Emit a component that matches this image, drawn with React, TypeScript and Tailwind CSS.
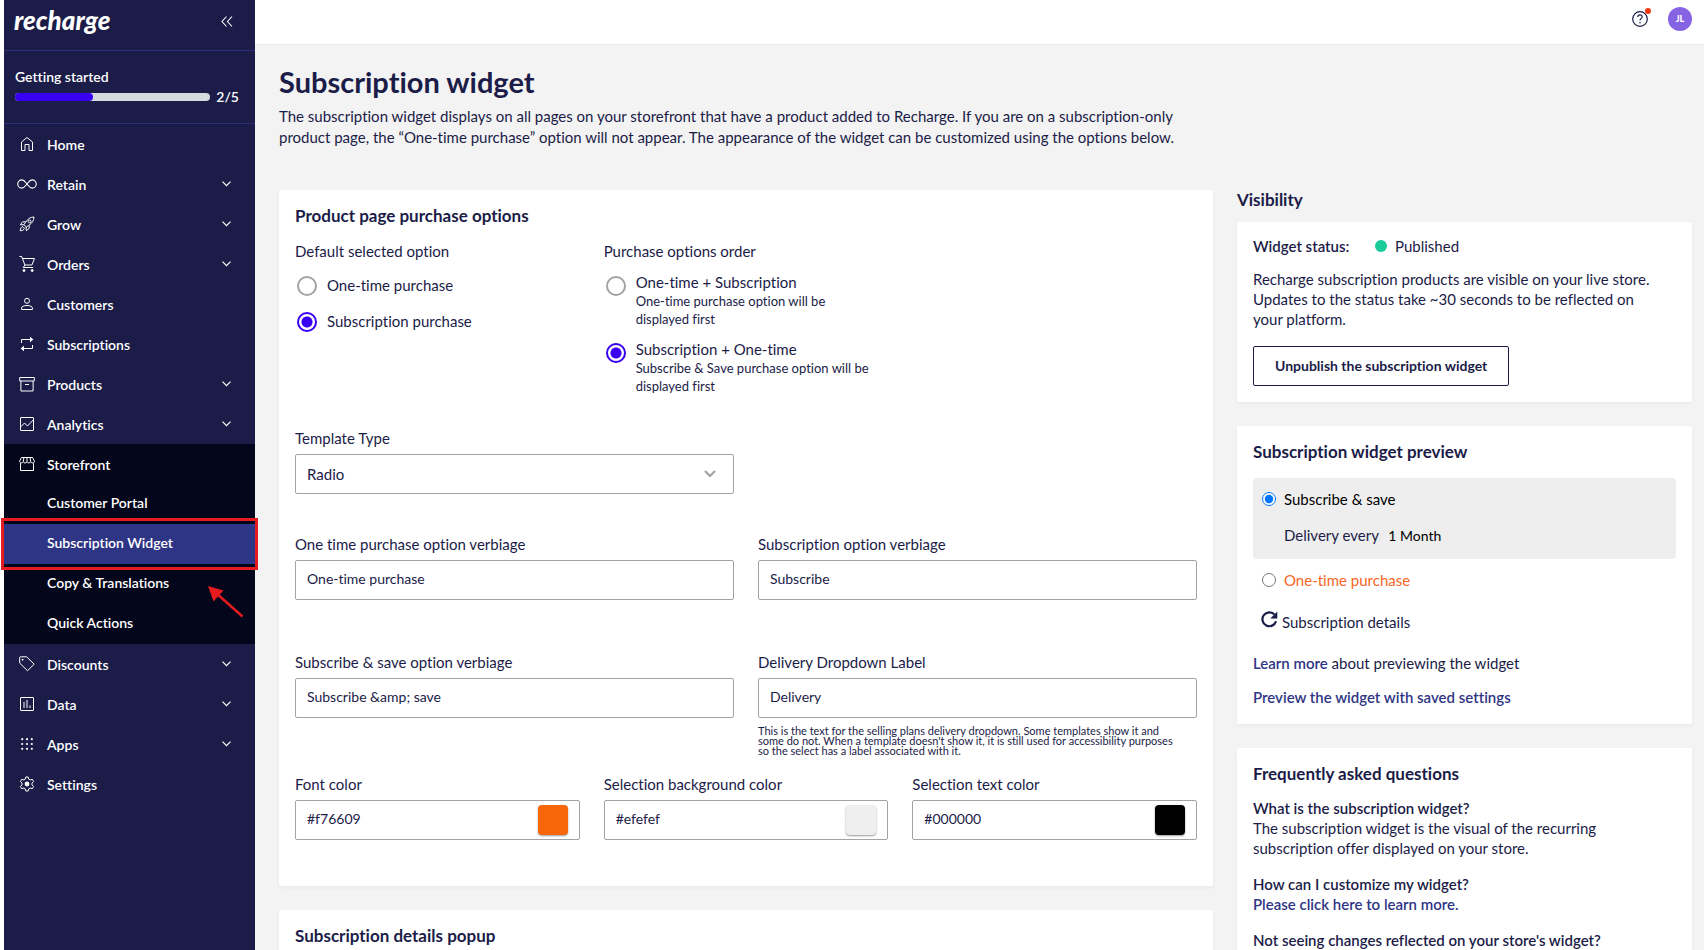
import React from "react";

type NavEntry = { label: string; icon: React.ReactNode; expandable?: boolean };

function Glyph({ children, size = 16 }: { children: React.ReactNode; size?: number }) {
  return (
    <svg
      width={size}
      height={size}
      viewBox="0 0 16 16"
      fill="none"
      stroke="currentColor"
      strokeWidth="1"
      aria-hidden="true"
      className="shrink-0 overflow-visible"
    >
      {children}
    </svg>
  );
}

const HomeIcon = (
  <Glyph>
    <path d="M2.5 14.5V6L8 1.5 13.5 6v8.500H10V8.500H6v6z" strokeLinejoin="round" />
  </Glyph>
);
const RetainIcon = (
  <Glyph size={20}>
    <path
      d="M8 8C6.600 6.300 5.700 4.700 3.900 4.700a3.300 3.300 0 0 0 0 6.600C5.700 11.300 6.600 9.700 8 8s2.300-3.300 4.100-3.300a3.300 3.300 0 0 1 0 6.600C10.300 11.300 9.400 9.700 8 8z"
      strokeWidth="0.9"
    />
  </Glyph>
);
const GrowIcon = (
  <Glyph>
    <path d="M15 1c-3.600.1-6 1.700-8.400 5.200L5 8.700 7.300 11l2.500-1.600C13.300 7 14.900 4.600 15 1z" strokeLinejoin="round" />
    <path d="M6.600 5.800H3.700L1.300 8.700l3.700.1M10.200 9.400v2.900l-2.900 2.400-.1-3.700" strokeLinejoin="round" />
    <circle cx="10.600" cy="5.400" r="1.400" />
    <path d="M3.900 10.600c-1.700.3-2.500 1.600-2.700 4.200 2.600-.2 3.900-1 4.200-2.700z" strokeLinejoin="round" />
  </Glyph>
);
const OrdersIcon = (
  <Glyph>
    <path d="M.5.500h2.200l3.200 8.500h7l2.600-6.500H3.500M5.900 9l-1.700 2.500h10" strokeLinejoin="round" />
    <circle cx="5" cy="14.500" r="1" fill="currentColor" />
    <circle cx="13.200" cy="14.500" r="1" fill="currentColor" />
  </Glyph>
);
const CustomersIcon = (
  <Glyph>
    <circle cx="8" cy="4.800" r="2.500" />
    <path d="M2.500 13.500v-1.300c0-1.700 2.700-2.700 5.500-2.700s5.500 1 5.500 2.700v1.300z" strokeLinejoin="round" />
  </Glyph>
);
const SubscriptionsIcon = (
  <Glyph>
    <path d="M2.500 7V3.500H12M13.500 9v3.500H4" />
    <path d="M11 .8v5.400l3.400-2.700zM5 9.800v5.400l-3.400-2.700z" fill="currentColor" stroke="none" />
  </Glyph>
);
const ProductsIcon = (
  <Glyph>
    <path d="M.7 1.500h14.600v3.500H.7zM1.900 5v10h12.200V5M6 8.500h4" strokeLinejoin="round" />
  </Glyph>
);
const AnalyticsIcon = (
  <Glyph>
    <rect x="1.500" y="1.500" width="13" height="13" rx=".5" />
    <path d="M1.800 10.800 5.500 7l3 3 5.700-6" />
  </Glyph>
);
const StorefrontIcon = (
  <Glyph>
    <path d="M2.400 1.500h11.200l1.800 3.700c0 2.300-3 2.300-3.700.4-.7 1.900-3 1.900-3.700 0-.7 1.900-3 1.900-3.700 0C3.600 7.500.6 7.500.6 5.200z" strokeLinejoin="round" />
    <path d="M4.900 1.500 4.300 5.600M8 1.500v4.100M11.100 1.500l.6 4.100M1.500 7.200v7.300h13V7.200" />
  </Glyph>
);
const DiscountsIcon = (
  <Glyph>
    <path d="M.7 1.300v5.800l7.800 7.600 6.700-6.500L7.600.8H1.200z" strokeLinejoin="round" />
    <circle cx="3.600" cy="3.700" r=".9" fill="currentColor" stroke="none" />
  </Glyph>
);
const DataIcon = (
  <Glyph>
    <rect x="1.500" y="1.500" width="13" height="13" rx=".5" />
    <path d="M5 5.800v6.200M8 4v8M11 9.500V12" />
  </Glyph>
);
const AppsIcon = (
  <Glyph>
    <g fill="currentColor" stroke="none">
      {[3.200, 8, 12.800].map((y) =>
        [3.200, 8, 12.800].map((x) => <circle key={`${x}-${y}`} cx={x} cy={y} r="1.100" />)
      )}
    </g>
  </Glyph>
);
const SettingsIcon = (
  <Glyph>
    <path
      d="M6.800 1h2.400l.5 2.100 1.500.9 2.100-.7 1.300 2.200L13 7.100v1.800l1.600 1.600-1.300 2.200-2.100-.7-1.500.9-.5 2.100H6.800l-.5-2.100-1.500-.9-2.100.7-1.300-2.200L3 8.900V7.100L1.400 5.500l1.300-2.200 2.100.7 1.500-.9z"
      strokeLinejoin="round"
    />
    <circle cx="8" cy="8" r="2.400" fill="currentColor" stroke="none" />
  </Glyph>
);

const primaryNav: NavEntry[] = [
  { label: "Home", icon: HomeIcon },
  { label: "Retain", icon: RetainIcon, expandable: true },
  { label: "Grow", icon: GrowIcon, expandable: true },
  { label: "Orders", icon: OrdersIcon, expandable: true },
  { label: "Customers", icon: CustomersIcon },
  { label: "Subscriptions", icon: SubscriptionsIcon },
  { label: "Products", icon: ProductsIcon, expandable: true },
  { label: "Analytics", icon: AnalyticsIcon, expandable: true },
];

const secondaryNav: NavEntry[] = [
  { label: "Discounts", icon: DiscountsIcon, expandable: true },
  { label: "Data", icon: DataIcon, expandable: true },
  { label: "Apps", icon: AppsIcon, expandable: true },
  { label: "Settings", icon: SettingsIcon },
];

function NavItem({ label, icon, expandable }: NavEntry) {
  return (
    <li>
      <a href="#" className="flex h-10 items-center pr-6 pl-3">
        <span className="flex w-[22px] justify-center">{icon}</span>
        <span className="ml-[9px] flex-1 pt-0.5">{label}</span>
        {expandable && (
          <svg width="9" height="6" viewBox="0 0 9 6" fill="none" stroke="currentColor" strokeWidth="1.200" aria-hidden="true">
            <path d="M.5.700 4.500 4.700 8.500.700" />
          </svg>
        )}
      </a>
    </li>
  );
}

function SubItem({ label }: { label: string }) {
  return (
    <li>
      <a href="#" className="flex h-10 items-center pb-0.5 pl-[43px]">
        {label}
      </a>
    </li>
  );
}

function Sidebar() {
  return (
    <aside className="w-[251px] shrink-0 bg-[#1b1c48] text-sm font-semibold text-white">
      <div className="flex h-[51px] items-start justify-between border-b border-[#2a2f7b] pr-[22px] pl-2.5">
        <span className="pt-1 text-[26px] leading-8 font-black italic">recharge</span>
        <button type="button" aria-label="Collapse menu" className="mt-4">
          <svg width="12" height="11" viewBox="0 0 12 11" fill="none" stroke="currentColor" strokeWidth="1.100" aria-hidden="true">
            <path d="M5.500.500 1 5.500l4.500 5M11 .5 6.500 5.500l4.500 5" />
          </svg>
        </button>
      </div>
      <div className="flex h-[73px] flex-col justify-center border-b border-[#2a2f7b] pr-4 pb-px pl-[11px]">
        <span id="onboarding" className="leading-5">Getting started</span>
        <div className="flex items-center justify-between">
          <div role="progressbar" aria-labelledby="onboarding" aria-valuenow={2} aria-valuemin={0} aria-valuemax={5} className="h-2 w-[195px] overflow-hidden rounded-full bg-[#d5dadd]">
            <div className="h-full w-2/5 rounded-r-full bg-[#3901f1]" />
          </div>
          <span className="leading-5">2/5</span>
        </div>
      </div>
      <nav>
        <ul>
          {primaryNav.map((item) => (
            <NavItem key={item.label} {...item} />
          ))}
        </ul>
        <ul className="bg-[#04061b]">
          <NavItem label="Storefront" icon={StorefrontIcon} />
          <SubItem label="Customer Portal" />
          <li className="relative">
            <a href="#" aria-current="page" className="flex h-10 items-center bg-[#2f3585] pb-0.5 pl-[43px]">
              Subscription Widget
            </a>
            <div className="pointer-events-none absolute -inset-x-[3px] -inset-y-[6px] z-10 border-[3px] border-[#e51b1f]" />
            <svg width="38" height="36" viewBox="0 0 38 36" className="pointer-events-none absolute top-[60px] left-[203px] z-10" aria-hidden="true">
              <path d="M9 9 35.500 32.500" stroke="#e51b1f" strokeWidth="2.500" />
              <path d="M1 2 16.500 6.500 6.500 17.500z" fill="#e51b1f" />
            </svg>
          </li>
          <SubItem label="Copy & Translations" />
          <SubItem label="Quick Actions" />
        </ul>
        <ul>
          {secondaryNav.map((item) => (
            <NavItem key={item.label} {...item} />
          ))}
        </ul>
      </nav>
    </aside>
  );
}

function Card({ title, className = "", children }: { title?: string; className?: string; children?: React.ReactNode }) {
  return (
    <section className={`rounded-xs bg-white px-4 pt-4 shadow-[0_2px_4px_rgba(0,0,0,0.04)] ${className}`}>
      {title && <h2 className="text-[17px] leading-5 font-bold">{title}</h2>}
      {children}
    </section>
  );
}

function RadioOption({ name, label, hint, defaultChecked }: { name: string; label: string; hint?: string; defaultChecked?: boolean }) {
  return (
    <label className="flex items-start gap-2.5 pl-0.5">
      <input
        type="radio"
        name={name}
        defaultChecked={defaultChecked}
        className="size-5 shrink-0 appearance-none rounded-full border-2 border-[#a3a3a3] bg-white checked:border-[#3901f1] checked:bg-[radial-gradient(circle,#3901f1_5px,transparent_6px)]"
      />
      <span className={hint ? "-mt-1" : "-mt-px"}>
        <span className="block leading-5">{label}</span>
        {hint && <span className="block max-w-[240px] text-[13px] leading-[18px]">{hint}</span>}
      </span>
    </label>
  );
}

const fieldClass = "h-10 w-full rounded-xs border border-[#a3a3a3] bg-white px-[11px] pb-1 text-sm";

function TextField({ id, label, value, hint }: { id: string; label: string; value: string; hint?: string }) {
  return (
    <div>
      <label htmlFor={id} className="mb-1.5 block leading-5">{label}</label>
      <input id={id} type="text" defaultValue={value} className={fieldClass} />
      {hint && <p className="mt-2 max-w-[425px] text-[11px] leading-[10px]">{hint}</p>}
    </div>
  );
}

function ColorField({ id, label, value, swatch }: { id: string; label: string; value: string; swatch: string }) {
  return (
    <div>
      <label htmlFor={id} className="mb-1.5 block leading-5">{label}</label>
      <div className="relative">
        <input id={id} type="text" defaultValue={value} className={fieldClass} />
        <button
          type="button"
          aria-label={`Pick ${label.toLowerCase()}`}
          className={`absolute top-[5px] right-3 size-[30px] rounded-sm shadow-[0_1px_2px_rgba(0,0,0,0.4)] ${swatch}`}
        />
      </div>
    </div>
  );
}

function PurchaseOptions() {
  return (
    <Card title="Product page purchase options" className="pb-[46px]">
      <div className="mt-[15px] grid grid-cols-3 gap-6">
        <fieldset>
          <legend className="mb-[15px] leading-5">Default selected option</legend>
          <div className="space-y-4">
            <RadioOption name="default" label="One-time purchase" />
            <RadioOption name="default" label="Subscription purchase" defaultChecked />
          </div>
        </fieldset>
        <fieldset>
          <legend className="mb-[15px] leading-5">Purchase options order</legend>
          <div className="space-y-[15px]">
            <RadioOption name="order" label="One-time + Subscription" hint="One-time purchase option will be displayed first" />
            <RadioOption name="order" label="Subscription + One-time" hint="Subscribe & Save purchase option will be displayed first" defaultChecked />
          </div>
        </fieldset>
      </div>
      <div className="mt-[33px] grid grid-cols-2 gap-6">
        <div>
          <label htmlFor="template" className="mb-1.5 block leading-5">Template Type</label>
          <div className="relative">
            <select id="template" className="h-10 w-full appearance-none rounded-xs border border-[#a3a3a3] bg-white px-[11px]">
              <option>Radio</option>
            </select>
            <svg width="12" height="8" viewBox="0 0 12 8" fill="none" stroke="#a3a3a3" strokeWidth="2.200" className="pointer-events-none absolute top-4 right-[18px]" aria-hidden="true">
              <path d="M1 1l5 5 5-5" />
            </svg>
          </div>
        </div>
      </div>
      <div className="mt-10 grid grid-cols-2 gap-6">
        <TextField id="onetime" label="One time purchase option verbiage" value="One-time purchase" />
        <TextField id="subscription" label="Subscription option verbiage" value="Subscribe" />
      </div>
      <div className="mt-[52px] grid grid-cols-2 gap-6">
        <TextField id="save" label="Subscribe & save option verbiage" value="Subscribe &amp;amp; save" />
        <TextField
          id="delivery"
          label="Delivery Dropdown Label"
          value="Delivery"
          hint="This is the text for the selling plans delivery dropdown. Some templates show it and some do not. When a template doesn't show it, it is still used for accessibility purposes so the select has a label associated with it."
        />
      </div>
      <div className="mt-[18px] grid grid-cols-3 gap-6">
        <ColorField id="font-color" label="Font color" value="#f76609" swatch="bg-[#f76609]" />
        <ColorField id="bg-color" label="Selection background color" value="#efefef" swatch="bg-[#efefef]" />
        <ColorField id="text-color" label="Selection text color" value="#000000" swatch="bg-black" />
      </div>
    </Card>
  );
}

function Aside() {
  return (
    <div className="col-span-4 space-y-6">
      <div>
        <h2 className="mb-3 text-[17px] leading-5 font-bold">Visibility</h2>
        <Card className="pb-4">
          <div className="flex items-center leading-4">
            <span className="w-[122px] font-semibold">Widget status:</span>
            <span className="mr-2 size-3 rounded-full bg-[#19cb9b]" />
            <span>Published</span>
          </div>
          <p className="mt-[15px] max-w-[405px] leading-5">
            Recharge subscription products are visible on your live store. Updates to the status take ~30 seconds to be
            reflected on your platform.
          </p>
          <button type="button" className="mt-[17px] block h-10 rounded-xs border border-[#1b1c48] px-[21px] text-sm font-bold">
            Unpublish the subscription widget
          </button>
        </Card>
      </div>
      <Card title="Subscription widget preview" className="pb-[17px]">
        <div className="mt-4 h-[81px] rounded-sm bg-[#eeeeee] px-[9px] pt-[11px]">
          <label className="flex items-center gap-2 leading-5 text-black">
            <input type="radio" name="preview" defaultChecked className="size-3.5 accent-[#0075ff]" />
            Subscribe &amp; save
          </label>
          <p className="mt-4 pl-[22px] leading-5">
            Delivery every <span className="ml-1.5 text-sm text-black">1 Month</span>
          </p>
        </div>
        <label className="mt-[11px] flex items-center gap-2 pl-[9px] leading-5 text-[#f7661f]">
          <input type="radio" name="preview" className="size-3.5" />
          One-time purchase
        </label>
        <div className="mt-[21px] flex items-center gap-1 pl-2 leading-5">
          <svg width="17" height="17" viewBox="0 0 17 17" fill="none" aria-hidden="true" className="mb-1">
            <path d="M15 10.200A6.900 6.900 0 1 1 13.400 3.600" stroke="currentColor" strokeWidth="2.200" />
            <path d="M16.300.500v7H9.300z" fill="currentColor" />
          </svg>
          <span>Subscription details</span>
        </div>
        <p className="mt-[21px] leading-5">
          <a href="#" className="font-semibold text-[#2f3585]">Learn more</a> about previewing the widget
        </p>
        <p className="mt-[14px] leading-5">
          <a href="#" className="font-semibold text-[#2f3585]">Preview the widget with saved settings</a>
        </p>
      </Card>
      <Card title="Frequently asked questions" className="pb-4">
        <div className="mt-[14px] space-y-4 leading-5">
          <div>
            <h3 className="font-semibold">What is the subscription widget?</h3>
            <p>The subscription widget is the visual of the recurring subscription offer displayed on your store.</p>
          </div>
          <div>
            <h3 className="font-semibold">How can I customize my widget?</h3>
            <a href="#" className="font-semibold text-[#2f3585]">Please click here to learn more.</a>
          </div>
          <div>
            <h3 className="font-semibold">Not seeing changes reflected on your store's widget?</h3>
          </div>
        </div>
      </Card>
    </div>
  );
}

export default function App() {
  return (
    <div className="flex h-screen overflow-hidden bg-[#f3f3f3] font-['Lato',sans-serif] text-[15px] text-[#1b1c48] [font-variant-ligatures:none]">
      <div className="w-1 shrink-0 bg-white" />
      <Sidebar />
      <div className="min-w-0 flex-1">
        <header className="flex h-[45px] items-start justify-end gap-5 border-b border-[#e5e7e8] bg-white pt-[7px] pr-3">
          <button type="button" aria-label="Help" className="relative mt-1">
            <svg width="16" height="16" viewBox="0 0 16 16" fill="none" stroke="currentColor" aria-hidden="true">
              <circle cx="8" cy="8" r="7.300" strokeWidth="1.200" />
              <path d="M5.800 6.100C5.800 4.600 6.700 3.900 8 3.900s2.200.8 2.200 2C10.200 7.400 8 7.600 8 9.600" strokeWidth="1.100" />
              <circle cx="8" cy="11.700" r=".8" fill="currentColor" stroke="none" />
            </svg>
            <span className="absolute -top-[3px] -right-[3px] size-1.5 rounded-full bg-[#f23a12]" />
          </button>
          <button type="button" aria-label="Account" className="size-6 rounded-full bg-[#8563e2] text-[9px] font-black text-white">
            JL
          </button>
        </header>
        <main className="pt-[19px] pr-3 pl-6">
          <h1 className="text-[29px] leading-9 font-bold">Subscription widget</h1>
          <p className="mt-1.5 max-w-[940px] leading-[21px]">
            The subscription widget displays on all pages on your storefront that have a product added to Recharge. If you
            are on a subscription-only product page, the “One-time purchase” option will not appear. The appearance of the
            widget can be customized using the options below.
          </p>
          <div className="mt-[42px] grid grid-cols-12 gap-6">
            <div className="col-span-8 space-y-6">
              <PurchaseOptions />
              <Card title="Subscription details popup" className="pb-12" />
            </div>
            <Aside />
          </div>
        </main>
      </div>
    </div>
  );
}
